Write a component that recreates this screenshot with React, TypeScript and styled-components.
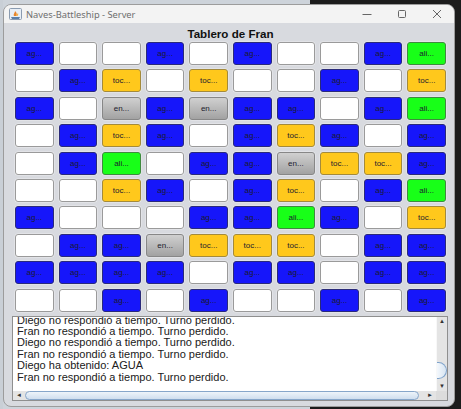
import React from "react";
import styled, { createGlobalStyle, css } from "styled-components";

const Global = createGlobalStyle`
  html, body { margin: 0; padding: 0; }
  body {
    width: 461px;
    height: 409px;
    overflow: hidden;
    font-family: "Liberation Sans", Arial, sans-serif;
    background: linear-gradient(to right, #cdd3da 0, #cdd3da 310px, #1c1c1c 310px);
  }
`;

const Desktop = styled.div`
  width: 461px;
  height: 409px;
  padding: 4px 0 0 3px;
  box-sizing: border-box;
  background: linear-gradient(to right, #c9cfd6 0 3px, transparent 3px);
`;

const Window = styled.div`
  width: 452px;
  height: 403px;
  box-sizing: border-box;
  border: 1px solid #9c9c9c;
  border-radius: 8px;
  overflow: hidden;
  display: flex;
  flex-direction: column;
  background: #d8dadf;
`;

const TitleBar = styled.div`
  height: 18px;
  flex: none;
  display: flex;
  align-items: center;
  background: #f3f3f3;
  padding-left: 5px;
`;

const AppIcon = styled.svg`
  width: 13px;
  height: 12px;
  flex: none;
`;

const TitleText = styled.span`
  margin-left: 4px;
  font-family: "Noto Sans", "Liberation Sans", sans-serif;
  font-size: 9.3px;
  color: #6e6e6e;
  flex: 1;
  white-space: nowrap;
`;

const Controls = styled.div`
  display: flex;
  align-items: center;
  height: 100%;
`;

const CtrlBtn = styled.div`
  width: 35px;
  height: 100%;
  display: flex;
  align-items: center;
  justify-content: center;
`;

const Content = styled.div`
  flex: 1;
  display: flex;
  flex-direction: column;
  padding-top: 4px;
`;

const Heading = styled.div`
  font-size: 11.6px;
  font-weight: bold;
  line-height: 14px;
  text-align: center;
  color: #111;
  padding-left: 3px;
`;

const Board = styled.div`
  margin: 1px 0 0 11px;
  width: 431px;
  display: grid;
  grid-template-columns: repeat(10, 1fr);
  grid-auto-rows: 23px;
  column-gap: 5px;
  row-gap: 4.4px;
`;

type Kind = "B" | "W" | "Y" | "G" | "E";

const fills: Record<Kind, ReturnType<typeof css>> = {
  B: css`
    background: #1616fa;
    border-color: #2a2a7a;
  `,
  W: css`
    background: #ffffff;
    border-color: #9a9a9a;
  `,
  Y: css`
    background: #ffc81c;
    border-color: #a38a3c;
  `,
  G: css`
    background: #18ff18;
    border-color: #3f8a3f;
  `,
  E: css`
    background: linear-gradient(to bottom, #d0d0d0, #a2a2a2);
    border-color: #878787;
  `,
};

const Cell = styled.div<{ $kind: Kind }>`
  box-sizing: border-box;
  border: 1px solid;
  border-radius: 3px;
  display: flex;
  align-items: center;
  justify-content: center;
  font-family: "Liberation Sans", Arial, sans-serif;
  font-size: 8px;
  color: #1b1b2e;
  box-shadow: 0 0 0 0.5px rgba(255, 255, 255, 0.5);
  ${(p) => fills[p.$kind]}
`;

const ScrollPane = styled.div`
  margin: 4px 0 0 8px;
  width: 436px;
  height: 85px;
  box-sizing: border-box;
  border: 1px solid #8f8f8f;
  display: grid;
  grid-template-columns: 1fr 11px;
  grid-template-rows: 1fr 9px;
  background: #ffffff;
`;

const View = styled.div`
  overflow: hidden;
  padding-left: 4px;
`;

const Lines = styled.div`
  margin-top: -2px;
  font-family: "Liberation Sans", Arial, sans-serif;
  font-size: 11px;
  line-height: 11.4px;
  color: #202020;
  white-space: pre;
`;

const VBar = styled.div`
  background: #e4e4e4;
  border-left: 1px solid #f8f8f8;
  display: flex;
  flex-direction: column;
  align-items: center;
`;

const Arrow = styled.div`
  font-size: 6px;
  line-height: 9px;
  height: 9px;
  color: #333;
  display: flex;
  align-items: center;
  justify-content: center;
`;

const Spacer = styled.div`
  flex: 1;
`;

const VThumb = styled.div`
  width: 10px;
  height: 17px;
  margin-bottom: 3px;
  box-sizing: border-box;
  border: 1px solid #7fa3cb;
  border-left: none;
  border-radius: 0 9px 9px 0;
  background: linear-gradient(to right, #f4f8fc, #d6e4f2);
  align-self: flex-start;
`;

const HBar = styled.div`
  background: #e4e4e4;
  display: flex;
  align-items: center;
  padding: 0 3px;
`;

const HThumb = styled.div`
  flex: 1;
  height: 9px;
  margin: 0 8px 0 3px;
  box-sizing: border-box;
  border: 1px solid #86a6ca;
  border-radius: 6px;
  background: linear-gradient(to bottom, #eef4fa, #cfdeee);
`;

const Corner = styled.div`
  background: #dcdcdc;
`;

const board: string[] = [
  "BWWBWBWWBG",
  "WBYWYWWBWY",
  "BWEBEBBWBG",
  "WBYBWBYBWB",
  "WBGWBBEYYB",
  "WWYBWBYWBG",
  "BWWWBBGBWY",
  "WBBEYYYWBB",
  "BBBBWBBWBB",
  "WWBWBWWBWB",
];

const labels: Record<Kind, string> = {
  B: "ag...",
  W: "",
  Y: "toc...",
  G: "ali...",
  E: "en...",
};

const log = [
  "Diego no respondió a tiempo. Turno perdido.",
  "Fran no respondió a tiempo. Turno perdido.",
  "Diego no respondió a tiempo. Turno perdido.",
  "Fran no respondió a tiempo. Turno perdido.",
  "Diego ha obtenido: AGUA",
  "Fran no respondió a tiempo. Turno perdido.",
];

export default function App() {
  return (
    <>
      <Global />
      <Desktop>
        <Window>
          <TitleBar>
            <AppIcon viewBox="0 0 13 12">
              <rect x="0.5" y="0.5" width="12" height="11" rx="1" fill="#e8eef5" stroke="#8a9bb0" />
              <path d="M2 9 L11 9 L10 11 L3 11 Z" fill="#5b7fa8" />
              <path d="M5 8 C4 6 6 5 6 3 C8 5 8 6 7.5 8 Z" fill="#e8842a" />
              <path d="M7 8 C7 6.5 8.5 6 9 5 C9.5 6.5 9 7.5 8.5 8 Z" fill="#f2b24a" />
            </AppIcon>
            <TitleText>Naves-Battleship - Server</TitleText>
            <Controls>
              <CtrlBtn>
                <svg width="10" height="10" viewBox="0 0 10 10">
                  <path d="M0.5 5.5 H9.5" stroke="#666" strokeWidth="1" />
                </svg>
              </CtrlBtn>
              <CtrlBtn>
                <svg width="10" height="10" viewBox="0 0 10 10">
                  <rect x="1.5" y="1.5" width="7" height="7" rx="1" fill="none" stroke="#666" strokeWidth="1" />
                </svg>
              </CtrlBtn>
              <CtrlBtn>
                <svg width="10" height="10" viewBox="0 0 10 10">
                  <path d="M1 1 L9 9 M9 1 L1 9" stroke="#666" strokeWidth="1" />
                </svg>
              </CtrlBtn>
            </Controls>
          </TitleBar>
          <Content>
            <Heading>Tablero de Fran</Heading>
            <Board>
              {board.flatMap((row, r) =>
                row.split("").map((k, c) => (
                  <Cell key={`${r}-${c}`} $kind={k as Kind}>
                    {labels[k as Kind]}
                  </Cell>
                ))
              )}
            </Board>
            <ScrollPane>
              <View>
                <Lines>{log.join("\n")}</Lines>
              </View>
              <VBar>
                <Arrow>▲</Arrow>
                <Spacer />
                <VThumb />
                <Arrow>▼</Arrow>
              </VBar>
              <HBar>
                <Arrow>◄</Arrow>
                <HThumb />
                <Arrow>►</Arrow>
              </HBar>
              <Corner />
            </ScrollPane>
          </Content>
        </Window>
      </Desktop>
    </>
  );
}
